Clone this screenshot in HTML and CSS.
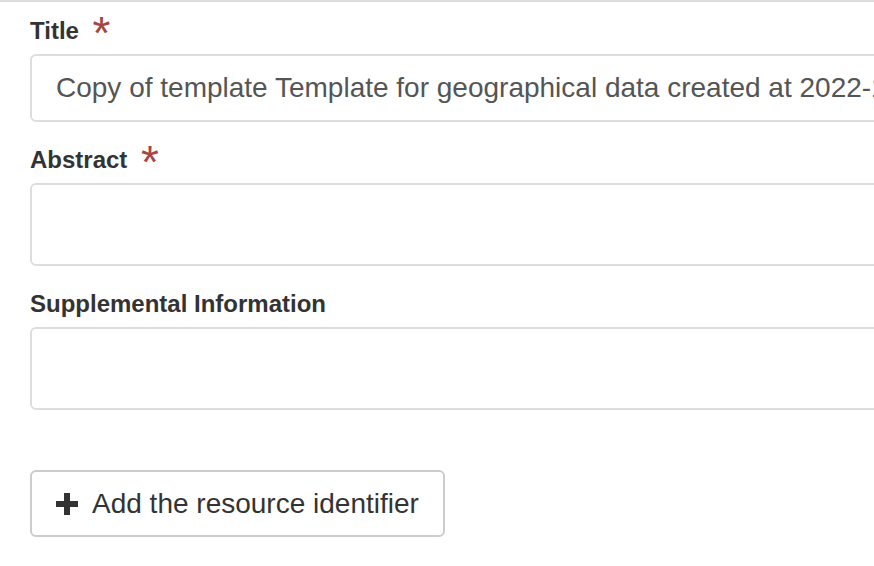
FILE: index.html
```html
<!DOCTYPE html>
<html lang="en">

<head>
    <meta charset="UTF-8">
    <title>Resource editor</title>
    <link rel="stylesheet" href="styles.css">
</head>

<body>
    <div class="editor-panel">
        <div class="form-group">
            <label class="control-label">Title <span class="required">*</span></label>
            <div class="form-control input-lg">Copy of template Template for geographical data created at 2022-11-14</div>
        </div>

        <div class="form-group">
            <label class="control-label">Abstract <span class="required">*</span></label>
            <div class="form-control textarea"></div>
        </div>

        <div class="form-group">
            <label class="control-label">Supplemental Information</label>
            <div class="form-control textarea"></div>
        </div>

        <div class="actions">
            <button class="btn btn-lg">
                <svg class="icon-plus" width="22" height="22" viewBox="0 0 22 22">
                    <path d="M8 0h6v8h8v6h-8v8h-6v-8h-8v-6h8z" fill="#333" />
                </svg>
                Add the resource identifier
            </button>
        </div>
    </div>
</body>

</html>
```

FILE: styles.css
```css
html,
body {
    margin: 0;
    padding: 0;
    background: #fff;
    overflow: hidden;
}

body {
    font-family: "Liberation Sans", Arial, sans-serif;
    font-size: 24px;
    line-height: 30px;
    color: #333;
}

.editor-panel {
    border-top: 2px solid #ddd;
    padding: 14px 0 0 30px;
}

.form-group {
    margin-bottom: 23px;
}

.control-label {
    display: block;
    height: 30px;
    font-weight: bold;
    margin-bottom: 8px;
    white-space: nowrap;
}

.required {
    display: inline-block;
    color: #a94442;
    font-size: 46px;
    line-height: 34px;
    vertical-align: top;
    margin-left: 7px;
    font-weight: normal;
}

.form-control {
    box-sizing: border-box;
    width: 900px;
    border: 2px solid #ddd;
    border-radius: 6px;
    background: #fff;
    color: #555;
    white-space: nowrap;
    overflow: hidden;
}

.input-lg {
    height: 68px;
    padding: 0 24px;
    font-size: 28px;
    line-height: 64px;
}

.textarea {
    height: 83px;
}

.actions {
    padding-top: 37px;
}

.btn {
    display: inline-flex;
    align-items: center;
    gap: 14px;
    box-sizing: border-box;
    height: 67px;
    padding: 0 24px;
    border: 2px solid #ccc;
    border-radius: 6px;
    background: #fff;
    color: #333;
    font-family: "Liberation Sans", Arial, sans-serif;
    font-size: 28px;
    cursor: pointer;
}

.icon-plus {
    flex: none;
}
```
